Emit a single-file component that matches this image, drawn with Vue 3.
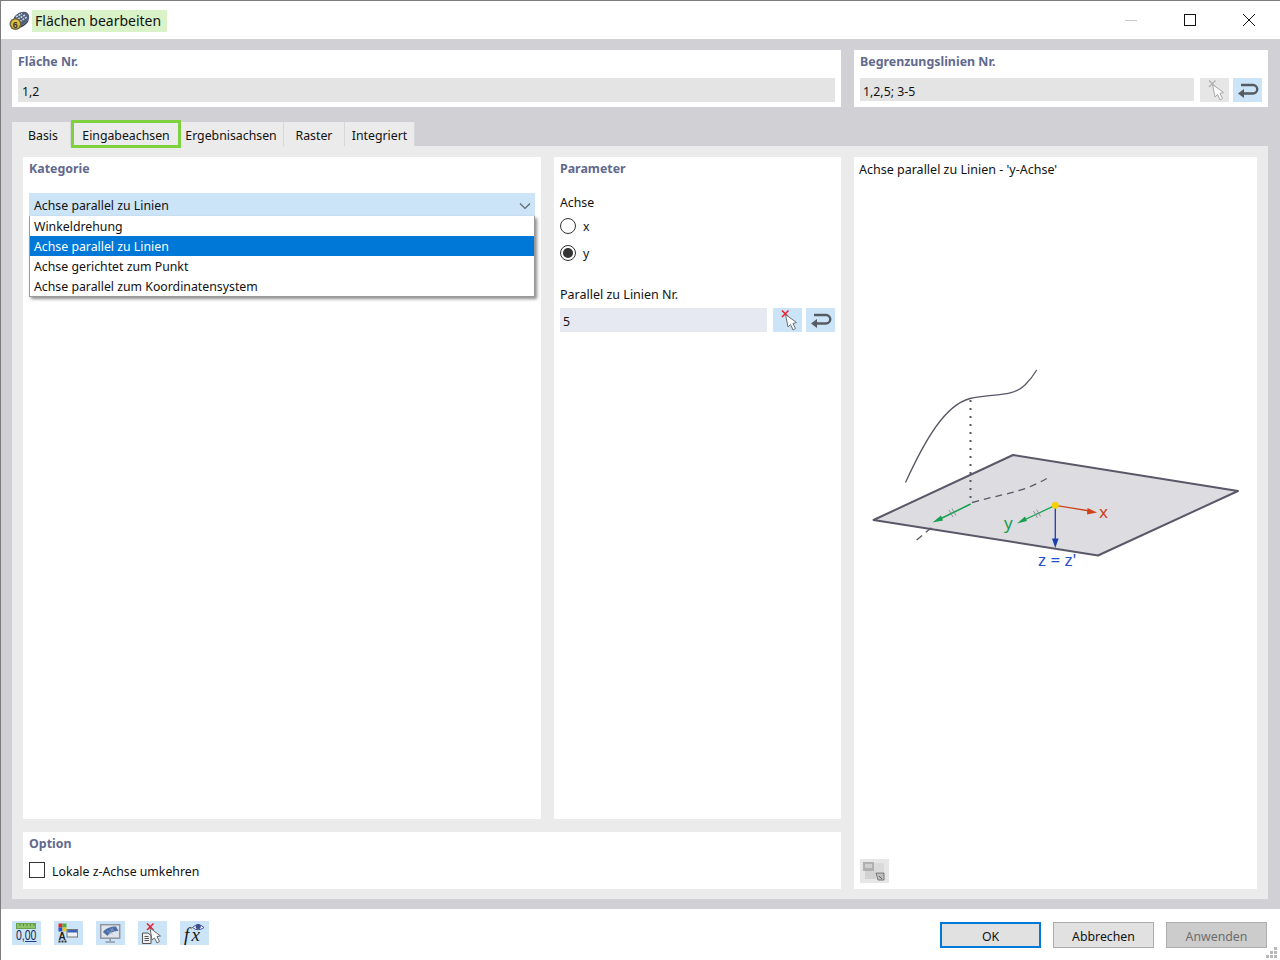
<template>
  <div class="dialog">
    <!-- Title bar -->
    <div class="titlebar">
      <svg class="app-icon" width="21" height="20" viewBox="0 0 21 20">
        <path d="M5 6 Q10 0 17 1 Q21 3 20 8 Q16 14 10 15 L5 12 Z" fill="#4f6078" />
        <path d="M7 6 L13 2.500 M9 8 L16 4 M11 10.500 L18 6" stroke="#c9d4e4" stroke-width="1.600" stroke-dasharray="2 1" />
        <path d="M10 15 Q16 14 20 8 L19 11 Q15 16 10 17 Z" fill="#2e3848" />
        <circle cx="6.500" cy="13" r="6" fill="#6b6240" />
        <circle cx="6.500" cy="13" r="4.500" fill="#e3bd3c" />
        <text x="3.800" y="16.500" class="app-icon-digit">6</text>
      </svg>
      <span class="title-text">Flächen bearbeiten</span>
      <div class="window-buttons">
        <svg width="14" height="14" viewBox="0 0 14 14"><path d="M1 7.500 H13" stroke="#c8c8c8" /></svg>
        <svg width="14" height="14" viewBox="0 0 14 14"><rect x="1.500" y="1.500" width="11" height="11" fill="none" stroke="#111" /></svg>
        <svg width="14" height="14" viewBox="0 0 14 14"><path d="M1 1 L13 13 M13 1 L1 13" stroke="#111" /></svg>
      </div>
    </div>

    <div class="content">
      <div class="top-row">
        <section class="panel top-panel">
          <h3>Fläche Nr.</h3>
          <div class="field readonly">1,2</div>
        </section>
        <section class="panel top-panel">
          <h3>Begrenzungslinien Nr.</h3>
          <div class="field-row">
            <div class="field readonly short">1,2,5; 3-5</div>
            <button class="icon-btn disabled">
              <svg width="29" height="24" viewBox="0 0 29 24">
                <path d="M9 2.500 L15.500 9 M15.500 2.500 L9 9" stroke="#b0b0b0" stroke-width="1.300" />
                <path d="M12.500 6.500 L15 19 L17.500 16.500 L20 22 L22.500 20.500 L20 15.500 L23.500 14.500 Z" fill="#fafafa" stroke="#a8a8a8" />
              </svg>
            </button>
            <button class="icon-btn">
              <svg width="29" height="24" viewBox="0 0 29 24">
                <path d="M10 15.500 H20 A4.250 4.250 0 0 0 20 7 H8" fill="none" stroke="#555b63" stroke-width="2.400" />
                <path d="M5 15.500 L11 11 V20 Z" fill="#555b63" />
              </svg>
            </button>
          </div>
        </section>
      </div>

      <div class="tabs">
        <div
          v-for="tab in tabs"
          :key="tab.label"
          class="tab"
          :class="{ active: tab.label === activeTab }"
          :style="{ width: tab.width + 'px' }"
        >
          {{ tab.label }}
        </div>
      </div>

      <div class="tab-body">
        <section class="panel category">
          <h3>Kategorie</h3>
          <div class="select-wrap">
            <div class="select">
              <span>Achse parallel zu Linien</span>
              <svg width="12" height="8" viewBox="0 0 12 8"><path d="M1 1.500 L6 6.500 L11 1.500" fill="none" stroke="#5f6670" stroke-width="1.200" /></svg>
            </div>
            <ul class="dropdown">
              <li
                v-for="option in categories"
                :key="option"
                :class="{ selected: option === selectedCategory }"
              >
                {{ option }}
              </li>
            </ul>
          </div>
        </section>

        <section class="panel parameter">
          <h3>Parameter</h3>
          <div class="param-label">Achse</div>
          <div v-for="axis in axes" :key="axis" class="radio-row">
            <span class="radio" :class="{ checked: axis === selectedAxis }"></span>
            <span>{{ axis }}</span>
          </div>
          <div class="param-label parallel-label">Parallel zu Linien Nr.</div>
          <div class="field-row">
            <div class="field editable">5</div>
            <button class="icon-btn">
              <svg width="29" height="24" viewBox="0 0 29 24">
                <path d="M9 2.500 L15.500 9 M15.500 2.500 L9 9" stroke="#e8202a" stroke-width="1.500" />
                <path d="M12.500 6.500 L15 19 L17.500 16.500 L20 22 L22.500 20.500 L20 15.500 L23.500 14.500 Z" fill="#fff" stroke="#6b6f76" />
              </svg>
            </button>
            <button class="icon-btn">
              <svg width="29" height="24" viewBox="0 0 29 24">
                <path d="M10 15.500 H20 A4.250 4.250 0 0 0 20 7 H8" fill="none" stroke="#555b63" stroke-width="2.400" />
                <path d="M5 15.500 L11 11 V20 Z" fill="#555b63" />
              </svg>
            </button>
          </div>
        </section>

        <section class="panel preview">
          <div class="preview-title">Achse parallel zu Linien - 'y-Achse'</div>
          <svg class="figure" width="403" height="679" viewBox="854 180 403 679">
            <polygon points="873.500,520 1013,455 1238,491 1098,555.500" fill="#dcdce1" stroke="#585868" stroke-width="2" stroke-linejoin="round" />
            <path d="M905.500 482.500 C925 440 945 405 970 398.500 C990 393 1012 398 1025 385 Q1032 378 1036.700 370" fill="none" stroke="#585868" stroke-width="1.300" />
            <path d="M970.500 400 V502" stroke="#585868" stroke-width="2" stroke-dasharray="2 6" />
            <path d="M972 502.500 C995 496 1010 494 1026.700 488 Q1037 484 1046.700 478.500" fill="none" stroke="#585868" stroke-width="1.300" stroke-dasharray="7 5" />
            <path d="M916.700 540 L932.700 526.700" stroke="#585868" stroke-width="1.300" stroke-dasharray="7 5" />

            <path d="M970.700 504 L938 520" stroke="#16a050" stroke-width="1.500" />
            <path d="M932.500 522.500 L941 515.500 L943 520.500 Z" fill="#16a050" />
            <path d="M949 510 L953 517 M952 508.500 L956 515.500" stroke="#808088" stroke-width="0.800" />

            <path d="M1055.300 505.300 L1022 521" stroke="#16a050" stroke-width="1.300" />
            <path d="M1017 523.500 L1025 516.500 L1027 521 Z" fill="#16a050" />
            <path d="M1033.500 511 L1037.500 518 M1036.500 509.500 L1040.500 516.500" stroke="#808088" stroke-width="0.800" />

            <path d="M1055.300 505.300 L1090 511" stroke="#d0421a" stroke-width="1.300" />
            <path d="M1097 512.500 L1087.500 508 L1087 514.500 Z" fill="#d0421a" />

            <path d="M1055.300 505.300 V540" stroke="#1a3fb0" stroke-width="1.300" />
            <path d="M1055.300 548 L1052 538.500 H1058.600 Z" fill="#1a3fb0" />
            <circle cx="1055.300" cy="505.300" r="3.500" fill="#f5d000" />

            <text x="1099" y="518" class="axis-text" fill="#d0421a">x</text>
            <text x="1004" y="529" class="axis-text" fill="#16a050">y</text>
            <text x="1038" y="566" class="axis-text" fill="#2250c8">z = z'</text>
          </svg>
          <button class="icon-btn disabled small-view">
            <svg width="29" height="24" viewBox="0 0 29 24">
              <rect x="3" y="3" width="11" height="9" fill="#b0b0b0" />
              <rect x="5" y="5" width="7" height="4" fill="#cfcfcf" />
              <rect x="14" y="4" width="10" height="9" fill="#dadada" />
              <rect x="5" y="12" width="11" height="8" fill="#d2d2d2" />
              <path d="M16 14 H24 V21 H18 Z" fill="#bdbdbd" stroke="#777" />
              <path d="M19 17 L22 20" stroke="#666" />
            </svg>
          </button>
        </section>

        <section class="panel option">
          <h3>Option</h3>
          <label class="check-row">
            <span class="checkbox"></span>
            <span class="check-label">Lokale z-Achse umkehren</span>
          </label>
        </section>
      </div>
    </div>

    <div class="footer">
      <div class="toolbar">
        <button class="icon-btn">
          <svg width="29" height="24" viewBox="0 0 29 24">
            <rect x="4.500" y="2.500" width="19" height="5" fill="#8cc46a" stroke="#6da04c" />
            <path d="M8 3 V5 M11.500 3 V5 M15 3 V5 M18.500 3 V5 M22 3 V5" stroke="#5a8a3e" />
            <text class="ruler-text" transform="translate(4 19) scale(0.75 1)">0,00</text>
            <path d="M13 20.500 H24.500" stroke="#1b3f9a" />
          </svg>
        </button>
        <button class="icon-btn">
          <svg width="29" height="24" viewBox="0 0 29 24">
            <rect x="4.500" y="2.500" width="4" height="4" fill="#e02a2a" />
            <rect x="8.500" y="2.500" width="4" height="4" fill="#4caf3c" />
            <rect x="4.500" y="6.500" width="4" height="4" fill="#2a50d0" />
            <rect x="8.500" y="6.500" width="4" height="4" fill="#e8c820" />
            <text x="4.500" y="18.500" class="a-text">A</text>
            <path d="M4.500 20.500 H6.500 M7.500 20.500 H9.500 M10.500 20.500 H12.500" stroke="#333" stroke-width="2" />
            <rect x="13" y="8.500" width="10.500" height="7.500" fill="#eef1f6" stroke="#777" />
            <rect x="13.500" y="9" width="9.500" height="2.500" fill="#3a62b8" />
          </svg>
        </button>
        <button class="icon-btn">
          <svg width="29" height="24" viewBox="0 0 29 24">
            <rect x="4.700" y="3.700" width="19" height="13.500" fill="#dfe3ea" stroke="#8f96a0" stroke-width="1.500" />
            <path d="M7 11 C10 7 15 5.500 20 5.500 L22.500 10 C18 10 13.500 11.500 11.500 15 Z" fill="#4c6ea8" />
            <path d="M11 10 L17 13 M14.500 8 L20 11 M13 14 L17 7" stroke="#9db4d8" stroke-width="0.600" />
            <path d="M14.200 17 V20 M9.500 21 H19" stroke="#8f96a0" stroke-width="1.500" />
          </svg>
        </button>
        <button class="icon-btn">
          <svg width="29" height="24" viewBox="0 0 29 24">
            <path d="M4.500 12 H10 L13 14.500 V22.500 H4.500 Z" fill="#eee" stroke="#555" />
            <path d="M6.500 15.500 H10.500 M6.500 17.500 H11 M6.500 19.500 H11" stroke="#555" />
            <path d="M9 2.500 L15.500 9 M15.500 2.500 L9 9" stroke="#e8202a" stroke-width="1.500" />
            <path d="M12 7 L14 19 L16.500 17 L19 22 L21.500 20.500 L19 15.500 L22.500 15 Z" fill="#fff" stroke="#666" />
          </svg>
        </button>
        <button class="icon-btn">
          <svg width="29" height="24" viewBox="0 0 29 24">
            <text x="4" y="20" class="fx-text">f</text>
            <text x="11.500" y="20" class="fx-text">x</text>
            <path d="M12.500 6.500 Q18 1 24 6.500 Q18 11 12.500 6.500 Z" fill="#fff" stroke="#3d4f8e" />
            <circle cx="18.200" cy="5.500" r="2.600" fill="#3d4f8e" />
          </svg>
        </button>
      </div>
      <div class="actions">
        <button class="action primary">OK</button>
        <button class="action">Abbrechen</button>
        <button class="action muted">Anwenden</button>
      </div>
      <svg class="grip" width="11" height="11" viewBox="0 0 11 11">
        <path d="M8 0 h3 v3 h-3 Z M4 4 h3 v3 h-3 Z M8 4 h3 v3 h-3 Z M0 8 h3 v3 h-3 Z M4 8 h3 v3 h-3 Z M8 8 h3 v3 h-3 Z" fill="#b8b8b8" />
      </svg>
    </div>
  </div>
</template>

<script setup>
const tabs = [
  { label: "Basis", width: 59 },
  { label: "Eingabeachsen", width: 110 },
  { label: "Ergebnisachsen", width: 103 },
  { label: "Raster", width: 61 },
  { label: "Integriert", width: 70 },
];
const activeTab = "Eingabeachsen";

const categories = [
  "Winkeldrehung",
  "Achse parallel zu Linien",
  "Achse gerichtet zum Punkt",
  "Achse parallel zum Koordinatensystem",
];
const selectedCategory = "Achse parallel zu Linien";

const axes = ["x", "y"];
const selectedAxis = "y";
</script>

<style>
html,
body {
  margin: 0;
  background: #fff;
}
</style>

<style scoped>
* {
  box-sizing: border-box;
}

.dialog {
  width: 1280px;
  height: 960px;
  display: flex;
  flex-direction: column;
  border-top: 1px solid #7c7c7c;
  border-left: 1px solid #7c7c7c;
  background: #fff;
  color: #111;
  font-family: "Noto Sans", "Open Sans", sans-serif;
  font-size: 12.3px;
}

.titlebar {
  height: 38px;
  display: flex;
  align-items: center;
  padding-left: 8px;
  padding-top: 2px;
}

.app-icon-digit {
  font-family: "Liberation Sans", sans-serif;
  font-size: 9px;
  font-weight: 700;
  fill: #333;
}

.title-text {
  margin-left: 2px;
  height: 22px;
  line-height: 22px;
  padding: 0 6px 0 3px;
  background: #d9f2c8;
  font-size: 14px;
}

.window-buttons {
  margin-left: auto;
  display: flex;
  gap: 45px;
  padding-right: 24px;
  margin-top: -2px;
}

.content {
  flex: 1;
  background: #d0d0d5;
  padding: 11px 12px 10px 11px;
  display: flex;
  flex-direction: column;
}

.top-row {
  display: grid;
  grid-template-columns: 829px 414px;
  column-gap: 13px;
  margin-bottom: 15px;
}

.panel {
  background: #fff;
}

.panel h3 {
  margin: 0;
  height: 22px;
  line-height: 24px;
  font-size: 12.4px;
  font-weight: 700;
  color: #62698f;
}

.top-panel {
  height: 57px;
  padding: 0 6px;
}

.top-panel h3 {
  margin-bottom: 6px;
}

.field {
  height: 24px;
  line-height: 27px;
  padding-left: 4px;
}

.field.readonly {
  background: #e4e4e4;
}

.field.short {
  height: 23px;
  width: 334px;
  padding-left: 3px;
}

.field.editable {
  width: 207px;
  background: #e6e8f2;
  padding-left: 3px;
}

.field-row {
  display: flex;
}

.field-row .icon-btn {
  margin-left: 4px;
}

.field-row .field + .icon-btn {
  margin-left: 6px;
}

.icon-btn {
  width: 29px;
  height: 24px;
  padding: 0;
  border: 0;
  display: block;
  background: #cce4f7;
}

.icon-btn svg {
  display: block;
}

.icon-btn.disabled {
  background: #e6e6e6;
}

.tabs {
  display: flex;
  height: 24px;
}

.tab {
  position: relative;
  background: #ebebeb;
  border-right: 1px solid #d8d8dc;
  text-align: center;
  line-height: 27px;
}

.tab:first-child {
  padding-left: 4px;
}

.tab:nth-child(3) {
  padding-right: 2px;
}

.tab.active {
  z-index: 1;
  height: 28px;
  margin-top: -2px;
  border: 3px solid #7ed03e;
  line-height: 25px;
}

.tab-body {
  flex: 1;
  background: #ebebeb;
  padding: 11px 11px 10px;
  display: grid;
  grid-template-columns: 518px 287px 403px;
  grid-template-rows: 662px 57px;
  gap: 13px;
}

.category {
  padding: 0 6px;
}

.select-wrap {
  position: relative;
  margin-top: 14px;
}

.select {
  height: 23px;
  background: #cce4f7;
  display: flex;
  align-items: center;
  justify-content: space-between;
  padding: 2px 4px 0 5px;
}

.dropdown {
  position: absolute;
  top: 23px;
  left: 0;
  right: 0;
  margin: 0;
  padding: 0;
  list-style: none;
  background: #fff;
  border: 1px solid #9a9a9a;
  border-top: 0;
  box-shadow: 2px 2px 3px rgba(0, 0, 0, 0.45);
}

.dropdown li {
  height: 20px;
  line-height: 21px;
  padding-left: 4px;
}

.dropdown li.selected {
  background: #0078d7;
  color: #fff;
}

.parameter {
  padding: 0 6px;
}

.param-label {
  margin-top: 14px;
  height: 20px;
  line-height: 20px;
}

.radio-row {
  display: flex;
  align-items: center;
  height: 27px;
}

.radio {
  position: relative;
  width: 16px;
  height: 16px;
  border: 1px solid #333;
  border-radius: 50%;
  margin-right: 7px;
  margin-bottom: 2px;
}

.radio.checked::after {
  content: "";
  position: absolute;
  inset: 2px;
  border-radius: 50%;
  background: #333;
}

.parallel-label {
  margin-top: 18px;
  margin-bottom: 3px;
  font-size: 12.5px;
}

.preview {
  grid-row: 1 / span 2;
  grid-column: 3;
  display: flex;
  flex-direction: column;
}

.preview-title {
  height: 23px;
  line-height: 25px;
  padding-left: 5px;
  font-size: 12.5px;
}

.figure {
  display: block;
  flex: none;
}

.axis-text {
  font-size: 17px;
}

.small-view {
  margin-left: 6px;
}

.ruler-text {
  font-family: "Liberation Sans", sans-serif;
  font-size: 14px;
  fill: #1b2a55;
}

.a-text {
  font-family: "Liberation Sans", sans-serif;
  font-size: 10px;
  font-weight: 700;
  fill: #222;
}

.fx-text {
  font-family: "Liberation Serif", serif;
  font-size: 19px;
  font-style: italic;
  fill: #1a1a1a;
}

.option {
  grid-column: 1 / span 2;
  grid-row: 2;
  padding: 0 6px;
}

.check-row {
  display: flex;
  align-items: center;
  margin-top: 6px;
  height: 20px;
}

.check-label {
  padding-top: 2px;
}

.checkbox {
  width: 16px;
  height: 16px;
  border: 1px solid #333;
  margin-right: 7px;
}

.footer {
  position: relative;
  height: 51px;
  display: flex;
  justify-content: space-between;
  padding: 12px 13px 0 11px;
}

.toolbar {
  display: flex;
  gap: 13px;
}

.actions {
  display: flex;
  gap: 12px;
  padding-top: 1px;
}

.action {
  width: 101px;
  height: 26px;
  padding: 3px 0 0;
  background: #e1e1e1;
  border: 1px solid #adadad;
  font: inherit;
  color: #111;
}

.action.primary {
  border: 2px solid #0078d7;
}

.action.muted {
  background: #cccccc;
  color: #6d6d6d;
}

.grip {
  position: absolute;
  right: 3px;
  bottom: 2px;
}
</style>
